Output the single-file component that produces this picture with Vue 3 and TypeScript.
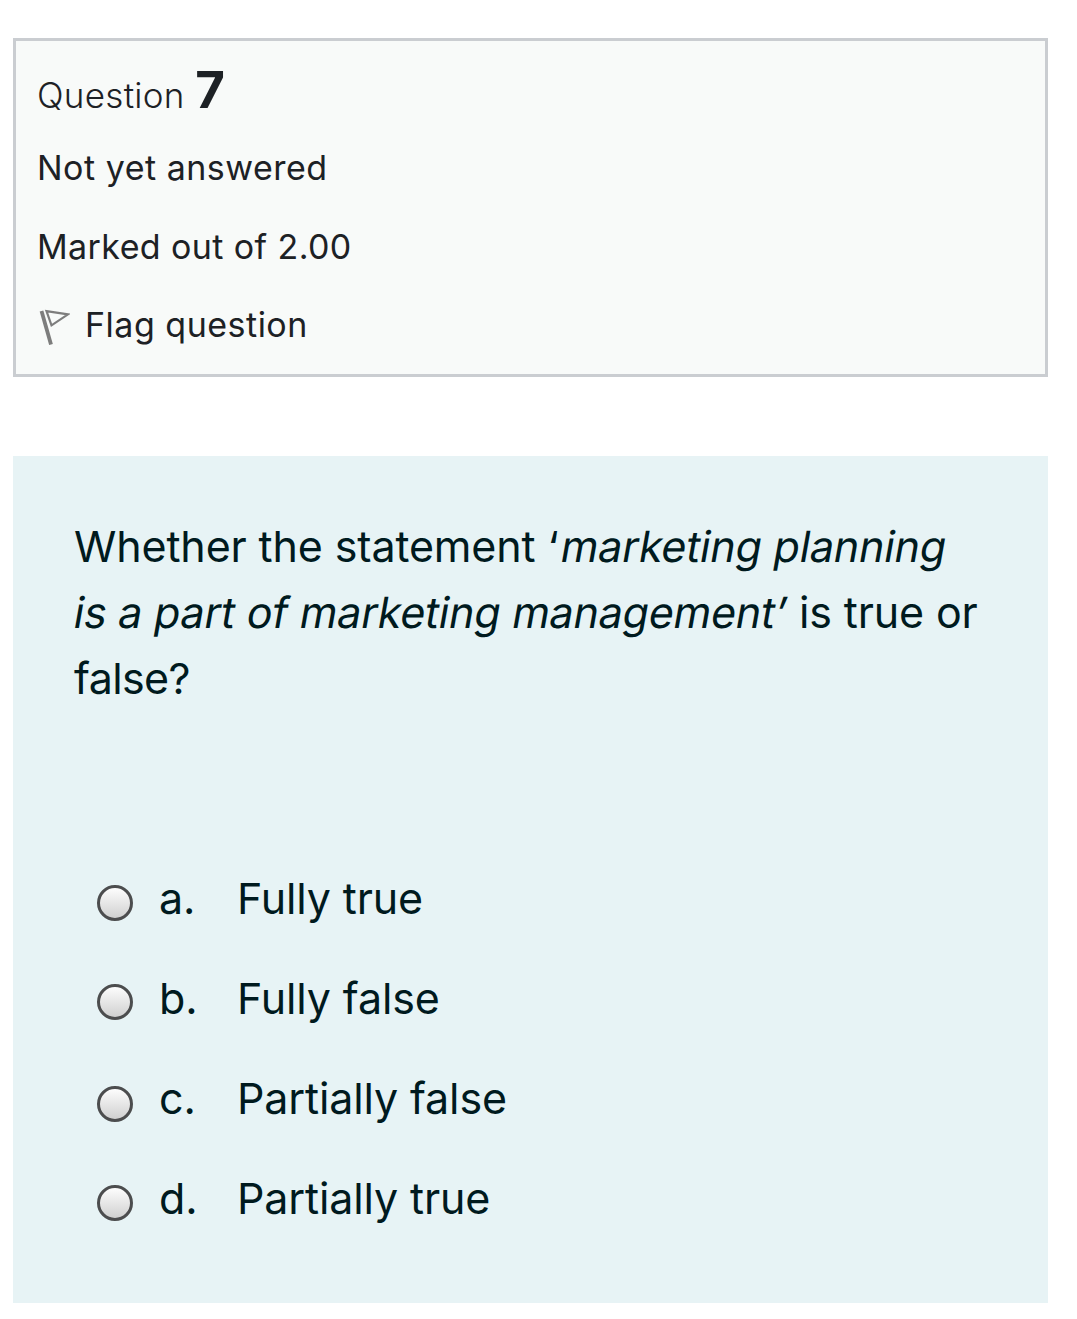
<script setup lang="ts">
interface Choice {
  letter: string
  text: string
  nudge: number
}

const choices: Choice[] = [
  { letter: 'a.', text: 'Fully true', nudge: 2 },
  { letter: 'b.', text: 'Fully false', nudge: 1 },
  { letter: 'c.', text: 'Partially false', nudge: 3 },
  { letter: 'd.', text: 'Partially true', nudge: 2 },
]
</script>

<template>
  <main class="page">
    <section class="info">
      <h3 class="title"><span class="word">Question</span><span class="number">7</span></h3>
      <div class="line state">Not yet answered</div>
      <div class="line grade">Marked out of 2.00</div>
      <div class="line flag">
        <svg class="flag-icon" viewBox="0 0 32 36" width="32" height="36">
          <path d="M3.5 2 13 35.5" fill="none" stroke="#7d7d7d" stroke-width="3.8" />
          <path d="M8.5 2.2 30 5.3 13.5 16.3Z" fill="none" stroke="#7d7d7d" stroke-width="2.2" />
        </svg>
        <span class="flag-text">Flag question</span>
      </div>
    </section>

    <section class="content">
      <p class="question">
        <span class="row"><span class="q1">Whether the statement ‘</span><em class="q2">marketing planning</em></span>
        <span class="row"><em class="q3">is a part of marketing management’</em><span class="q4">is true or</span></span>
        <span class="row q5">false?</span>
      </p>
      <div class="answers">
        <label v-for="c in choices" :key="c.letter" class="answer">
          <span class="radio" :style="{ marginTop: `${c.nudge * 2}px` }"></span>
          <span class="letter">{{ c.letter }}</span>
          <span class="text">{{ c.text }}</span>
        </label>
      </div>
    </section>
  </main>
</template>

<style>
body {
  background: #fff;
}
</style>

<style scoped>
.page {
  box-sizing: border-box;
  width: 1077px;
  height: 1319px;
  padding: 38px 29px 0 13px;
  font-family: Inter, 'Liberation Sans', sans-serif;
  color: #1d2125;
}
.info {
  box-sizing: border-box;
  height: 339px;
  padding: 17px 21px 0;
  border: 3px solid #cacdd1;
  background: #f8faf9;
}
.title {
  display: flex;
  align-items: baseline;
  gap: 10.5px;
  margin: 0;
  height: 70px;
  line-height: 64px;
  font-weight: 300;
}
.word {
  font-size: 35px;
  letter-spacing: 0.28px;
}
.number {
  font-size: 51px;
  font-weight: 700;
}
.line {
  display: flex;
  align-items: center;
  height: 79px;
  font-size: 34px;
  letter-spacing: 0.5px;
  white-space: pre;
}
.state {
  height: 79px;
}
.grade {
  height: 78px;
  letter-spacing: 0.4px;
}
.flag-icon {
  margin: 4px 15px 0 1px;
}
.content {
  box-sizing: border-box;
  height: 847px;
  margin-top: 79px;
  padding: 57px 61px 0;
  background: #e7f3f5;
  color: #001a1e;
  font-size: 43px;
  letter-spacing: -0.14px;
}
.question {
  margin: 0;
}
.row {
  display: flex;
  height: 66px;
  line-height: 66px;
  white-space: pre;
}
.row em {
  display: block;
  font-style: normal;
  transform: skewX(-10deg);
  transform-origin: 0 48px;
}
.row .q2 {
  letter-spacing: -0.2px;
}
.row .q3 {
  margin-left: -2px;
  letter-spacing: -0.24px;
}
.q4 {
  margin-left: 15px;
}
.q5 {
  letter-spacing: -0.6px;
}
.answers {
  padding: 140px 0 0 23px;
}
.answer {
  display: flex;
  align-items: center;
  height: 100px;
}
.radio {
  box-sizing: border-box;
  width: 36px;
  height: 36px;
  border: 3px solid #4c4d4e;
  border-radius: 50%;
  background: linear-gradient(#fdfdfd, #d0d0d0);
}
.letter,
.text {
  padding-bottom: 7px;
}
.letter {
  width: 78px;
  margin-left: 26px;
}
</style>
